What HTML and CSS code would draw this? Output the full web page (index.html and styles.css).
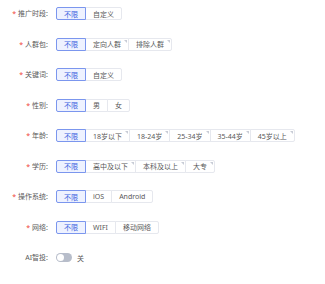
FILE: index.html
```html
<!DOCTYPE html>
<html>
    <head>
        <title>定向设置</title>
        <link rel="stylesheet" href="styles.css">
    </head>
    <body>
        <div class="form">
            <div class="row">
                <div class="label required">推广时段:</div>
                <div class="group">
                    <span class="opt active">不限</span>
                    <span class="opt">自定义</span>
                </div>
            </div>
            <div class="row">
                <div class="label required">人群包:</div>
                <div class="group">
                    <span class="opt active">不限</span>
                    <span class="opt mark">定向人群</span>
                    <span class="opt mark">排除人群</span>
                </div>
            </div>
            <div class="row">
                <div class="label required">关键词:</div>
                <div class="group">
                    <span class="opt active">不限</span>
                    <span class="opt">自定义</span>
                </div>
            </div>
            <div class="row">
                <div class="label required">性别:</div>
                <div class="group">
                    <span class="opt active">不限</span>
                    <span class="opt">男</span>
                    <span class="opt">女</span>
                </div>
            </div>
            <div class="row">
                <div class="label required">年龄:</div>
                <div class="group">
                    <span class="opt active">不限</span>
                    <span class="opt mark">18岁以下</span>
                    <span class="opt mark">18-24岁</span>
                    <span class="opt mark">25-34岁</span>
                    <span class="opt mark">35-44岁</span>
                    <span class="opt mark">45岁以上</span>
                </div>
            </div>
            <div class="row">
                <div class="label required">学历:</div>
                <div class="group">
                    <span class="opt active">不限</span>
                    <span class="opt mark">高中及以下</span>
                    <span class="opt mark">本科及以上</span>
                    <span class="opt mark">大专</span>
                </div>
            </div>
            <div class="row">
                <div class="label required">操作系统:</div>
                <div class="group">
                    <span class="opt active">不限</span>
                    <span class="opt">iOS</span>
                    <span class="opt">Android</span>
                </div>
            </div>
            <div class="row">
                <div class="label required">网络:</div>
                <div class="group">
                    <span class="opt active">不限</span>
                    <span class="opt">WIFI</span>
                    <span class="opt">移动网络</span>
                </div>
            </div>
            <div class="row">
                <div class="label">AI智投:</div>
                <div class="switch-wrap">
                    <span class="switch"><span class="knob"></span></span>
                    <span class="switch-text">关</span>
                </div>
            </div>
        </div>
    </body>
</html>
```

FILE: styles.css
```css
body {
    margin: 0;
    background-color: white;
    color: #595959;
    font-family: 'Noto Sans', 'Noto Sans CJK SC', sans-serif;
    font-size: 7px;
}

.form {
    display: flex;
    flex-direction: column;
    gap: 17.5px;
    padding-top: 7px;
}

.row {
    display: flex;
    align-items: center;
    height: 13px;
}

.label {
    width: 56px;
    padding-right: 8px;
    box-sizing: border-box;
    text-align: right;
    color: #595959;
    line-height: 13px;
}

.label.required::before {
    content: '*';
    color: #f04134;
    margin-right: 2px;
}

.group {
    display: flex;
    height: 13px;
}

.opt {
    position: relative;
    display: flex;
    align-items: center;
    height: 13px;
    padding: 0 7px;
    box-sizing: border-box;
    border: 1px solid #e6e8ee;
    margin-left: -1px;
    background-color: white;
    color: #595959;
    white-space: nowrap;
}

.opt:first-child {
    margin-left: 0;
    border-radius: 2px 0 0 2px;
}

.opt:last-child {
    border-radius: 0 2px 2px 0;
}

.opt.active {
    z-index: 1;
    border-color: #7b96ee;
    background-color: #eef2ff;
    color: #3d64e0;
}

.opt.mark::after {
    content: '';
    position: absolute;
    top: 1px;
    right: 1px;
    width: 0;
    height: 0;
    border-top: 3px solid #c8ccd6;
    border-left: 3px solid transparent;
}

.switch-wrap {
    display: flex;
    align-items: center;
    gap: 5px;
}

.switch {
    display: flex;
    align-items: center;
    width: 16px;
    height: 9px;
    padding: 0 1px;
    box-sizing: border-box;
    border-radius: 5px;
    background-color: #b7bdca;
}

.knob {
    width: 7px;
    height: 7px;
    border-radius: 50%;
    background-color: white;
}

.switch-text {
    color: #595959;
}
```
